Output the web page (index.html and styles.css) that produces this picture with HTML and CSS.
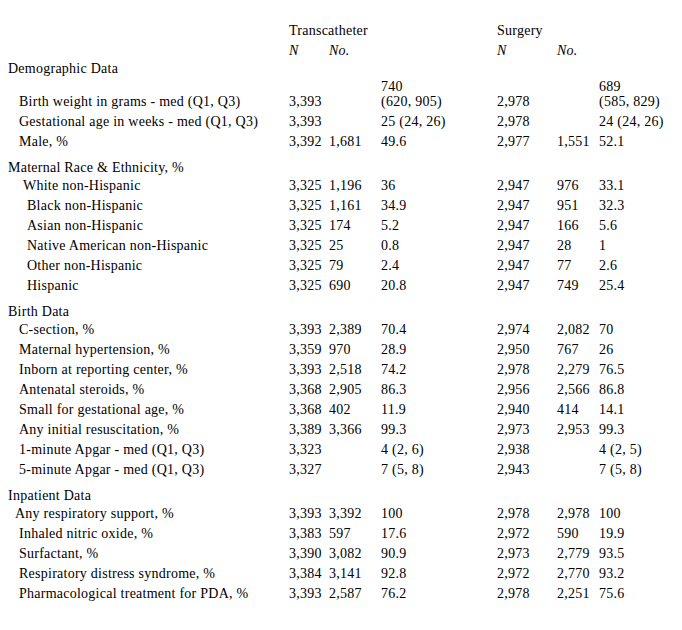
FILE: index.html
```html
<!DOCTYPE html>
<html lang="en">
<head>
<meta charset="utf-8">
<title>Characteristics</title>
<link rel="stylesheet" href="styles.css">
</head>
<body>
<table class="tbl">
  <colgroup>
    <col class="c-label">
    <col class="c-n">
    <col class="c-no">
    <col class="c-val">
    <col class="c-sn">
    <col class="c-sno">
    <col class="c-sval">
  </colgroup>
  <tbody>
    <tr class="row">
      <td></td><td colspan="3">Transcatheter</td><td colspan="3">Surgery</td>
    </tr>
    <tr class="row">
      <td></td><td class="it">N</td><td class="it">No.</td><td></td><td class="it">N</td><td class="it">No.</td><td></td>
    </tr>
    <tr class="sec first">
      <td class="h0">Demographic Data</td><td></td><td></td><td></td><td></td><td></td><td></td>
    </tr>
    <tr class="row">
      <td class="i1">Birth weight in grams - med (Q1, Q3)</td><td>3,393</td><td></td><td>740<br>(620, 905)</td><td>2,978</td><td></td><td>689<br>(585, 829)</td>
    </tr>
    <tr class="row">
      <td class="i1">Gestational age in weeks - med (Q1, Q3)</td><td>3,393</td><td></td><td>25 (24, 26)</td><td>2,978</td><td></td><td>24 (24, 26)</td>
    </tr>
    <tr class="row">
      <td class="i1">Male, %</td><td>3,392</td><td>1,681</td><td>49.6</td><td>2,977</td><td>1,551</td><td>52.1</td>
    </tr>
    <tr class="sec gap">
      <td class="i1">Maternal Race &amp; Ethnicity, %</td><td></td><td></td><td></td><td></td><td></td><td></td>
    </tr>
    <tr class="row">
      <td class="i2">White non-Hispanic</td><td>3,325</td><td>1,196</td><td>36</td><td>2,947</td><td>976</td><td>33.1</td>
    </tr>
    <tr class="row">
      <td class="i3">Black non-Hispanic</td><td>3,325</td><td>1,161</td><td>34.9</td><td>2,947</td><td>951</td><td>32.3</td>
    </tr>
    <tr class="row">
      <td class="i3">Asian non-Hispanic</td><td>3,325</td><td>174</td><td>5.2</td><td>2,947</td><td>166</td><td>5.6</td>
    </tr>
    <tr class="row">
      <td class="i3">Native American non-Hispanic</td><td>3,325</td><td>25</td><td>0.8</td><td>2,947</td><td>28</td><td>1</td>
    </tr>
    <tr class="row">
      <td class="i3">Other non-Hispanic</td><td>3,325</td><td>79</td><td>2.4</td><td>2,947</td><td>77</td><td>2.6</td>
    </tr>
    <tr class="row">
      <td class="i3">Hispanic</td><td>3,325</td><td>690</td><td>20.8</td><td>2,947</td><td>749</td><td>25.4</td>
    </tr>
    <tr class="sec gap">
      <td class="h0">Birth Data</td><td></td><td></td><td></td><td></td><td></td><td></td>
    </tr>
    <tr class="row">
      <td class="i1">C-section, %</td><td>3,393</td><td>2,389</td><td>70.4</td><td>2,974</td><td>2,082</td><td>70</td>
    </tr>
    <tr class="row">
      <td class="i1">Maternal hypertension, %</td><td>3,359</td><td>970</td><td>28.9</td><td>2,950</td><td>767</td><td>26</td>
    </tr>
    <tr class="row">
      <td class="i1">Inborn at reporting center, %</td><td>3,393</td><td>2,518</td><td>74.2</td><td>2,978</td><td>2,279</td><td>76.5</td>
    </tr>
    <tr class="row">
      <td class="i1">Antenatal steroids, %</td><td>3,368</td><td>2,905</td><td>86.3</td><td>2,956</td><td>2,566</td><td>86.8</td>
    </tr>
    <tr class="row">
      <td class="i1">Small for gestational age, %</td><td>3,368</td><td>402</td><td>11.9</td><td>2,940</td><td>414</td><td>14.1</td>
    </tr>
    <tr class="row">
      <td class="i1">Any initial resuscitation, %</td><td>3,389</td><td>3,366</td><td>99.3</td><td>2,973</td><td>2,953</td><td>99.3</td>
    </tr>
    <tr class="row">
      <td class="i1">1-minute Apgar - med (Q1, Q3)</td><td>3,323</td><td></td><td>4 (2, 6)</td><td>2,938</td><td></td><td>4 (2, 5)</td>
    </tr>
    <tr class="row">
      <td class="i1">5-minute Apgar - med (Q1, Q3)</td><td>3,327</td><td></td><td>7 (5, 8)</td><td>2,943</td><td></td><td>7 (5, 8)</td>
    </tr>
    <tr class="sec gap">
      <td class="h0">Inpatient Data</td><td></td><td></td><td></td><td></td><td></td><td></td>
    </tr>
    <tr class="row">
      <td class="i05">Any respiratory support, %</td><td>3,393</td><td>3,392</td><td>100</td><td>2,978</td><td>2,978</td><td>100</td>
    </tr>
    <tr class="row">
      <td class="i1">Inhaled nitric oxide, %</td><td>3,383</td><td>597</td><td>17.6</td><td>2,972</td><td>590</td><td>19.9</td>
    </tr>
    <tr class="row">
      <td class="i1">Surfactant, %</td><td>3,390</td><td>3,082</td><td>90.9</td><td>2,973</td><td>2,779</td><td>93.5</td>
    </tr>
    <tr class="row">
      <td class="i1">Respiratory distress syndrome, %</td><td>3,384</td><td>3,141</td><td>92.8</td><td>2,972</td><td>2,770</td><td>93.2</td>
    </tr>
    <tr class="row">
      <td class="i1">Pharmacological treatment for PDA, %</td><td>3,393</td><td>2,587</td><td>76.2</td><td>2,978</td><td>2,251</td><td>75.6</td>
    </tr>
  </tbody>
</table>
</body>
</html>
```

FILE: styles.css
```css
html, body {
  background: #ffffff;
}
body {
  margin: 0;
  padding: 20px 0 0 8px;
  font-family: "Liberation Serif", "Times New Roman", serif;
  font-size: 14px;
  letter-spacing: 0.25px;
  color: #000000;
}
.tbl {
  border-collapse: collapse;
  table-layout: fixed;
  width: 666px;
}
.c-label { width: 281px; }
.c-n { width: 40px; }
.c-no { width: 52px; }
.c-val { width: 116px; }
.c-sn { width: 60px; }
.c-sno { width: 42px; }
.c-sval { width: 75px; }
.tbl td {
  padding: 2.5px 0;
  line-height: 15px;
  vertical-align: bottom;
  white-space: nowrap;
}
.tbl .sec td {
  padding: 1px 0;
}
.tbl .sec.first td {
  padding: 0.5px 0;
}
.tbl .sec.gap td {
  padding: 8.5px 0 0.5px;
}
.it { font-style: italic; }
.h0 { padding-left: 0; }
.tbl td.i05 { padding-left: 7px; }
.tbl td.i1 { padding-left: 11px; }
.tbl td.i2 { padding-left: 15px; }
.tbl td.i3 { padding-left: 19px; }
```
